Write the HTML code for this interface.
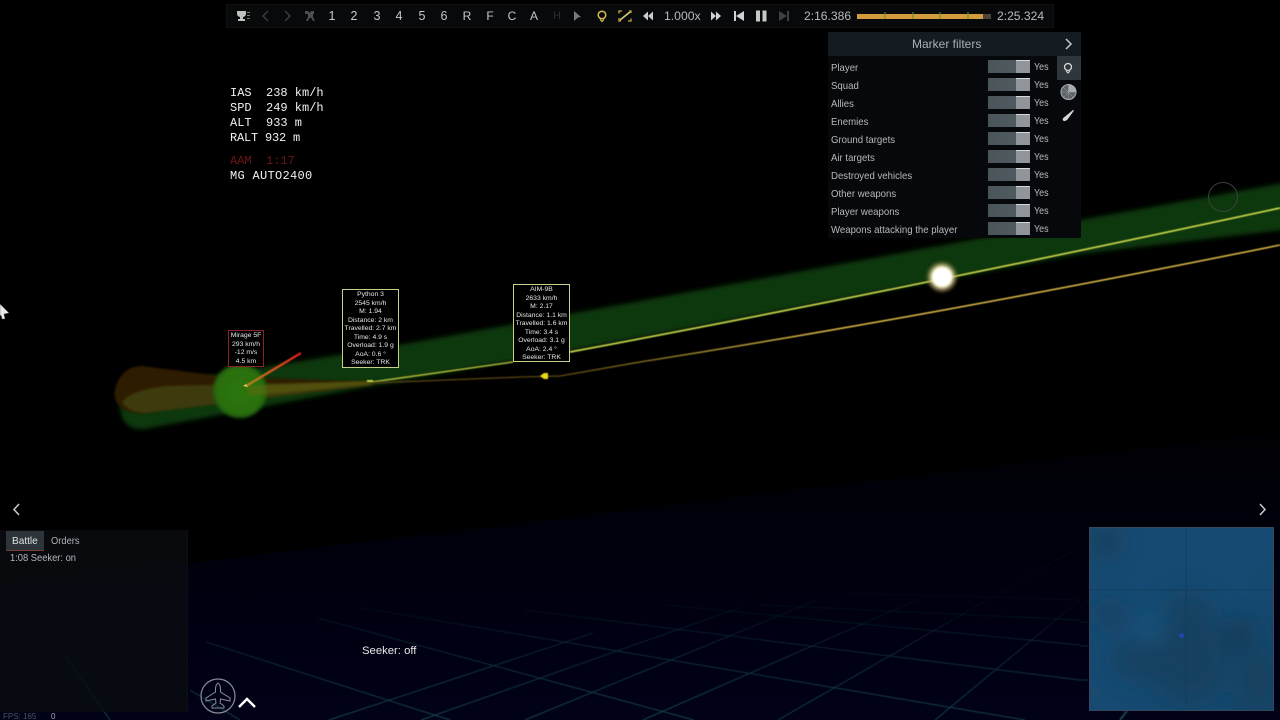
<!DOCTYPE html>
<html><head><meta charset="utf-8"><title>Replay</title>
<style>
html,body{margin:0;padding:0;background:#000;width:1280px;height:720px;overflow:hidden}
body{position:relative;font-family:"Liberation Sans",sans-serif;color:#c4c8ca}
.a{position:absolute;white-space:nowrap}
svg{position:absolute;left:0;top:0}
.hud{font:12px/15px "Liberation Mono",monospace;color:#f2f2f2;left:230px;white-space:pre}
.tb{top:8px;font-size:12.5px;line-height:16px;color:#c6c8c8;width:16px;text-align:center}
.lbl{left:831px;font-size:10.5px;line-height:14px;color:#b5babc;transform:scaleX(.915);transform-origin:left center}
.yes{left:1034px;font-size:10.5px;line-height:14px;color:#b9bec0;transform:scaleX(.85);transform-origin:left center}
.tg{left:988px;width:42px;height:13px;background:linear-gradient(90deg,#4a555a 0,#4f5a60 67%,#8f9598 67%,#8f9598 100%)}
.tg:after{content:"";position:absolute;right:0;top:0;width:14px;height:1px;background:#d5d8da}
.box{border:1.3px solid;background:#000;text-align:center;color:#e6e6e6;font-size:6.8px;line-height:8.5px;box-sizing:border-box;padding-top:1px;overflow:hidden}
.ch{font-size:10.5px;line-height:14px;transform:scaleX(.89);transform-origin:left center}
</style></head><body>

<svg width="1280" height="720" viewBox="0 0 1280 720">
<defs>
<filter id="b1"><feGaussianBlur stdDeviation="1"/></filter>
<filter id="b15"><feGaussianBlur stdDeviation="1.6"/></filter>
<filter id="b3" x="-5%" y="-30%" width="110%" height="160%"><feGaussianBlur stdDeviation="2.5"/></filter>
<filter id="b8"><feGaussianBlur stdDeviation="12"/></filter>
<filter id="b5"><feGaussianBlur stdDeviation=".5"/></filter>
<radialGradient id="gc"><stop offset="0" stop-color="#2c7610"/><stop offset=".8" stop-color="#2a7010"/><stop offset="1" stop-color="#21600e"/></radialGradient>
<radialGradient id="glow"><stop offset="0" stop-color="#fff"/><stop offset=".55" stop-color="#fffbd8"/><stop offset=".72" stop-color="#c8b880" stop-opacity=".7"/><stop offset="1" stop-color="#6a5a20" stop-opacity="0"/></radialGradient>
<linearGradient id="rl" x1="0" x2="1" y1="0" y2="0"><stop offset="0" stop-color="#a88a18"/><stop offset=".5" stop-color="#d9501a"/><stop offset="1" stop-color="#d81e1e"/></linearGradient>
<linearGradient id="ol" gradientUnits="userSpaceOnUse" x1="540" y1="0" x2="820" y2="0"><stop offset="0" stop-color="#4a3a10"/><stop offset=".3" stop-color="#6a5a18"/><stop offset="1" stop-color="#d8b644"/></linearGradient>
<linearGradient id="nv" gradientUnits="userSpaceOnUse" x1="0" y1="432" x2="0" y2="720"><stop offset="0" stop-color="#000004"/><stop offset=".55" stop-color="#00000f"/><stop offset="1" stop-color="#010118"/></linearGradient>
<linearGradient id="gr" gradientUnits="userSpaceOnUse" x1="0" y1="595" x2="0" y2="720"><stop offset="0" stop-color="#0a2430" stop-opacity=".25"/><stop offset=".5" stop-color="#0e2c3a"/><stop offset="1" stop-color="#174652"/></linearGradient>
<linearGradient id="mm" x1="0" x2="1" y1="0" y2="1"><stop offset="0" stop-color="#174a72"/><stop offset=".5" stop-color="#164a72"/><stop offset="1" stop-color="#15466a"/></linearGradient>
</defs>

<polygon points="0,586 464,530 1280,432 1280,720 0,720" fill="url(#nv)"/>

<g stroke="url(#gr)" stroke-width="1" fill="none" filter="url(#b5)">
<path d="M206,642 L450,720"/>
<path d="M318,618 L694,720"/>
<path d="M363,608 L1025,720"/>
<path d="M525,610 L1080,680"/>
<path d="M666,605 L1080,645"/>
<path d="M761,605 L1080,620"/>
<path d="M851,593 L1080,600"/>
<path d="M329,720 L593,633"/>
<path d="M421,720 L739,608"/>
<path d="M525,720 L817,600"/>
<path d="M643,720 L924,597"/>
<path d="M778,720 L1080,547"/>
<path d="M935,720 L1080,600"/>
<path d="M63,652 L110,720"/>
<path d="M190,690 L240,720"/>
<path d="M1080,610 L1088,600"/>
<path d="M1080,622 L1088,622"/>
<path d="M1080,646 L1088,646"/>
<path d="M1080,680 L1088,680"/>
<path d="M1120,720 L1127,711" stroke-width="2"/>
</g>

<!-- green trail -->
<path d="M120,405 C120,395 130,391 150,386 L410,343 L640,301 L900,253 L1080,220 L1300,180 L1300,228 L1080,254 L1000,269 L880,292 L570,351 L513,361 L372,386 L145,429 C127,430 120,420 120,405Z" fill="#0d3808" filter="url(#b3)"/>
<!-- orange trail -->
<path d="M115,390 C118,375 128,366 142,366 L220,376 L372,382 L372,385 L240,398 L145,413 C125,414 112,405 115,390Z" fill="#2f1a06" filter="url(#b1)"/>
<path d="M122,402 C130,392 145,389 165,386 L372,381 L372,385 L145,413 C133,413 125,408 122,402Z" fill="#3c3a08" filter="url(#b1)"/>
<circle cx="240" cy="391" r="27" fill="url(#gc)" filter="url(#b15)"/>
<path d="M245,386 L372,381 L372,384 L250,396Z" fill="#6a6a10" opacity=".45" filter="url(#b1)"/>

<line x1="246" y1="386" x2="301" y2="353" stroke="url(#rl)" stroke-width="2.4" filter="url(#b5)"/>

<!-- lines -->
<path d="M372,382 L513,362" stroke="#a8b438" stroke-width="1.5" fill="none" filter="url(#b5)"/>
<path d="M570,352 Q900,290 1280,208" stroke="#c8d44a" stroke-width="1.7" fill="none" filter="url(#b5)"/>
<path d="M372,383 L520,377 L560,376 L640,362 Q930,316 1280,245" stroke="url(#ol)" stroke-width="1.6" fill="none" filter="url(#b5)"/>

<circle cx="942" cy="277" r="17" fill="url(#glow)" filter="url(#b1)"/>
<circle cx="942" cy="277" r="9" fill="#fff" filter="url(#b1)"/>

<circle cx="1223" cy="197" r="14.5" fill="none" stroke="#38443a" stroke-width="1"/>

<!-- small markers -->
<path d="M540,376 L544,373 L548,373 L548,379 L544,379Z" fill="#e8d81c" filter="url(#b5)"/>
<rect x="367" y="380" width="6" height="2" fill="#c8d850" filter="url(#b5)"/>
<path d="M243,386 L246,384 L248,387Z" fill="#e8c860"/>

<!-- cursor -->
<path d="M0,304 L9,313 L4,314 L5,319 L2,319 L1,315 L0,316Z" fill="#e8e8e8" stroke="#444" stroke-width=".4"/>
</svg>

<!-- top bar -->
<div class="a" style="left:226px;top:4px;width:828px;height:24px;background:#08090a;border:1px solid #0e1012;box-sizing:border-box"></div>
<svg width="1280" height="32" viewBox="0 0 1280 32" style="height:32px">
<g fill="#c4c6c4">
<path d="M237,11 h9 v2.5 q0,3 -3,3.5 v2 h2 v2 h-7 v-2 h2 v-2 q-3,-.5 -3,-3.5z" fill="#bfc1bf"/>
<path d="M247,12 h3 v1 h-3z M247,15 h3 v1 h-3z M247,18 h3 v1 h-3z" fill="#777"/>
<path d="M305,11 h3 l2,2 l1,-2 h3 v3 h-1 v3 l2,4 h-2 l-1.5,-3 h-2 l-1.5,3 h-2 l2,-4 v-3 h-3z" fill="#4e5050"/>
<path d="M574,11 L581,17 L578,17.5 L574,21Z" fill="#777a7a"/>
<path d="M643,16 L648,11.5 V20.5Z M648,16 L653,11.5 V20.5Z" fill="#c9cccc"/>
<path d="M721,16 L716,11.5 V20.5Z M716,16 L711,11.5 V20.5Z" fill="#d0d2d2"/>
<path d="M734,11 h2 v10 h-2z M736,16 L744,11 V21Z" fill="#d0d2d2"/>
<rect x="756" y="10.5" width="4" height="11" fill="#c8caca"/><rect x="762.5" y="10.5" width="4" height="11" fill="#c8caca"/>
<path d="M779,11 L787,16 L779,21Z M787,11 h2 v10 h-2z" fill="#3f4141"/>
</g>
<path d="M268,11 L263,16 L268,21" stroke="#3d3f3f" stroke-width="1.4" fill="none"/>
<path d="M285,11 L290,16 L285,21" stroke="#3d3f3f" stroke-width="1.4" fill="none"/>
<circle cx="602" cy="15" r="3.8" fill="none" stroke="#d8bc58" stroke-width="1.5"/>
<path d="M600,19.5 L602,21.5 L604,19.5" stroke="#d8bc58" stroke-width="1.2" fill="none"/>
<path d="M620,20 L630,12" stroke="#d8cc78" stroke-width="1.6"/>
<path d="M619,13.5 v-2.5 h3 M628,21 h3 v-2.5 M619,18 v3 h2 M631,13 v-2 h-2" stroke="#c8a840" stroke-width="1.3" fill="none"/>
<rect x="857" y="14" width="126" height="5" fill="#d29c3c"/>
<rect x="983" y="14" width="8" height="5" fill="#4a443a"/>
<g stroke="#5f9228" stroke-width="1"><path d="M885,12 v7 M913,12 v7 M940,12 v7 M968,12 v7"/></g>
</svg>
<div class="a tb" style="left:324px">1</div>
<div class="a tb" style="left:346px">2</div>
<div class="a tb" style="left:369px">3</div>
<div class="a tb" style="left:391px">4</div>
<div class="a tb" style="left:414px">5</div>
<div class="a tb" style="left:436px">6</div>
<div class="a tb" style="left:459px;font-size:12px">R</div>
<div class="a tb" style="left:482px;font-size:12px">F</div>
<div class="a tb" style="left:504px;font-size:12px">C</div>
<div class="a tb" style="left:526px;font-size:12px">A</div>
<div class="a tb" style="left:549px;font-size:11px;color:#2c2e2e">H</div>
<div class="a tb" style="left:664px;width:auto;font-size:12.2px;color:#b9bcbc">1.000x</div>
<div class="a tb" style="left:804px;width:auto;font-size:12.1px;color:#b9bcbc">2:16.386</div>
<div class="a tb" style="left:997px;width:auto;font-size:12.1px;color:#b9bcbc">2:25.324</div>

<!-- marker filters -->
<div class="a" style="left:828px;top:32px;width:253px;height:206px;background:#06080b"></div>
<div class="a" style="left:828px;top:32px;width:253px;height:24px;background:#141b21"></div>
<div class="a" style="left:912px;top:36px;font-size:12px;line-height:16px;color:#a9b0b3">Marker filters</div>
<div class="a" style="left:1057px;top:56px;width:24px;height:24px;background:#30373c"></div>
<svg width="1280" height="130" viewBox="0 0 1280 130" style="height:130px">
<path d="M1066,39 L1071,44 L1066,49" stroke="#c6cacc" stroke-width="1.5" fill="none"/>
<circle cx="1068" cy="67" r="3.5" fill="none" stroke="#d8dcde" stroke-width="1.3"/>
<path d="M1066,71 L1068,73 L1070,71" stroke="#d8dcde" stroke-width="1" fill="none"/>
<circle cx="1068.5" cy="92" r="7.5" fill="#5c6265" stroke="#a4a8aa" stroke-width="1.1"/>
<path d="M1068.5,92 L1068.5,84.5 A7.5,7.5 0 0 1 1076,92Z" fill="#a9adaf"/>
<path d="M1061,92 h15 M1068.5,84.5 v15 M1063,87 L1074,98 M1074,87 L1063,98" stroke="#9da1a3" stroke-width=".5"/>
<path d="M1064.5,117 L1073,110 L1074,110.5 L1067.5,119.5 Q1065,122 1063,120.5 Q1062,118.5 1064.5,117Z" fill="#d5d8da"/>
</svg>
<div class="a lbl" style="top:61px">Player</div>
<div class="a lbl" style="top:79px">Squad</div>
<div class="a lbl" style="top:97px">Allies</div>
<div class="a lbl" style="top:115px">Enemies</div>
<div class="a lbl" style="top:133px">Ground targets</div>
<div class="a lbl" style="top:151px">Air targets</div>
<div class="a lbl" style="top:169px">Destroyed vehicles</div>
<div class="a lbl" style="top:187px">Other weapons</div>
<div class="a lbl" style="top:205px">Player weapons</div>
<div class="a lbl" style="top:223px">Weapons attacking the player</div>
<div class="a tg" style="top:60px"></div><div class="a yes" style="top:60px">Yes</div>
<div class="a tg" style="top:78px"></div><div class="a yes" style="top:78px">Yes</div>
<div class="a tg" style="top:96px"></div><div class="a yes" style="top:96px">Yes</div>
<div class="a tg" style="top:114px"></div><div class="a yes" style="top:114px">Yes</div>
<div class="a tg" style="top:132px"></div><div class="a yes" style="top:132px">Yes</div>
<div class="a tg" style="top:150px"></div><div class="a yes" style="top:150px">Yes</div>
<div class="a tg" style="top:168px"></div><div class="a yes" style="top:168px">Yes</div>
<div class="a tg" style="top:186px"></div><div class="a yes" style="top:186px">Yes</div>
<div class="a tg" style="top:204px"></div><div class="a yes" style="top:204px">Yes</div>
<div class="a tg" style="top:222px"></div><div class="a yes" style="top:222px">Yes</div>

<!-- HUD -->
<div class="a hud" style="top:86px">IAS  238 km/h</div>
<div class="a hud" style="top:101px">SPD  249 km/h</div>
<div class="a hud" style="top:116px">ALT  933 m</div>
<div class="a hud" style="top:131px;letter-spacing:-.2px">RALT 932 m</div>
<div class="a hud" style="top:154px;color:#6e1414">AAM  1:17</div>
<div class="a hud" style="top:169px;letter-spacing:.3px">MG AUTO2400</div>

<!-- labels -->
<div class="a box" style="left:228px;top:330px;width:36px;height:37px;border-color:#8c2228">Mirage 5F<br>293 km/h<br>-12 m/s<br>4.5 km</div>
<div class="a box" style="left:342px;top:289px;width:57px;height:79px;border-color:#c2d484">Python 3<br>2545 km/h<br>M: 1.94<br>Distance: 2 km<br>Travelled: 2.7 km<br>Time: 4.9 s<br>Overload: 1.9 g<br>AoA: 0.6 °<br>Seeker: TRK</div>
<div class="a box" style="left:513px;top:284px;width:57px;height:78px;border-color:#c8d08c">AIM-9B<br>2633 km/h<br>M: 2.17<br>Distance: 1.1 km<br>Travelled: 1.6 km<br>Time: 3.4 s<br>Overload: 3.1 g<br>AoA: 2.4 °<br>Seeker: TRK</div>

<!-- chat -->
<svg width="1280" height="720" viewBox="0 0 1280 720">
<path d="M19,504 L14,509.5 L19,515" stroke="#c8cccc" stroke-width="1.5" fill="none"/>
<path d="M1260,504 L1265,509.5 L1260,515" stroke="#c8cccc" stroke-width="1.5" fill="none"/>
<path d="M239,707 L247,699 L255,707" stroke="#fff" stroke-width="2.4" fill="none"/>
<circle cx="218" cy="696" r="17" fill="none" stroke="#8a8e96" stroke-width="1.2"/>
<path d="M218,683 Q220.5,685 220.5,689 V692 L230,698 V701 L220.5,699 L220,703 L224,706 V708 H212 V706 L216,703 L215.5,699 L206,701 V698 L215.5,692 V689 Q215.5,685 218,683Z" fill="none" stroke="#8a8e96" stroke-width="1"/>
</svg>
<div class="a" style="left:0;top:530px;width:188px;height:182px;background:rgba(10,13,18,.8);border-right:1px solid #0c1016;box-sizing:border-box"></div>
<div class="a" style="left:6px;top:531px;width:38px;height:20px;background:#2d353a;border-bottom:1px solid #7a3a34;box-sizing:border-box"></div>
<div class="a ch" style="left:12px;top:534px;color:#dfe2e3;transform:scaleX(.96)">Battle</div>
<div class="a ch" style="left:51px;top:534px;color:#aeb3b5">Orders</div>
<div class="a ch" style="left:10px;top:551px;color:#b5babc">1:08 Seeker: on</div>
<div class="a" style="left:3px;top:711px;font-size:8px;line-height:11px;color:#4e5458">FPS: 165</div>
<div class="a" style="left:51px;top:711px;font-size:8px;line-height:11px;color:#a0a4a6">0</div>
<div class="a" style="left:362px;top:644px;font-size:11.3px;line-height:14px;color:#e8e8e8">Seeker: off</div>

<!-- minimap -->
<svg width="1280" height="720" viewBox="0 0 1280 720">
<defs><clipPath id="mc"><rect x="1089" y="527" width="185" height="184"/></clipPath></defs>
<rect x="1089" y="527" width="185" height="184" fill="url(#mm)"/>
<g clip-path="url(#mc)">
<g filter="url(#b8)" opacity=".9">
<ellipse cx="1105" cy="542" rx="14" ry="15" fill="#1a3a52"/>
<ellipse cx="1240" cy="635" rx="13" ry="16" fill="#143650"/>
<ellipse cx="1190" cy="660" rx="38" ry="42" fill="#14405f"/>
<ellipse cx="1140" cy="660" rx="28" ry="20" fill="#14405f"/>
<ellipse cx="1110" cy="615" rx="18" ry="12" fill="#153f5e"/>
<ellipse cx="1190" cy="610" rx="25" ry="15" fill="#14405f"/>
<ellipse cx="1258" cy="680" rx="18" ry="30" fill="#143f5c"/>
<ellipse cx="1150" cy="630" rx="12" ry="10" fill="#1c5a86"/>
</g>
<path d="M1186,527 V705" stroke="#123c5a" stroke-width="1" opacity=".8"/>
<path d="M1089,590 H1274" stroke="#123c5a" stroke-width="1" opacity=".8"/>
</g>
<rect x="1089.5" y="527.5" width="184" height="183" fill="none" stroke="#35475a" stroke-width="1"/>
<circle cx="1181.5" cy="635.5" r="2.4" fill="#2244b0"/>
</svg>
<div class="a" style="left:1092px;top:688px;font-size:10.5px;line-height:13px;color:#2e4c60">F</div>
</body></html>
